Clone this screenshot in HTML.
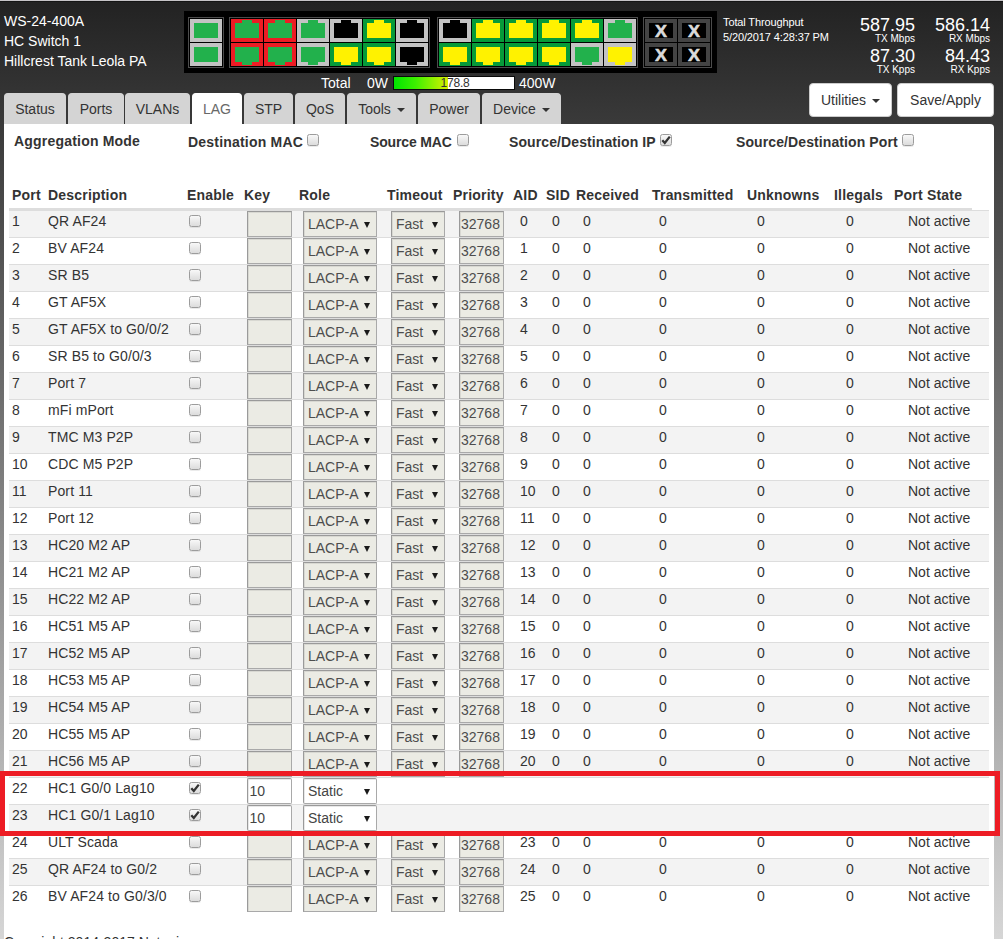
<!DOCTYPE html>
<html lang="en"><head><meta charset="utf-8"><title>WS-24-400A - HC Switch 1</title>
<style>
html,body{margin:0;padding:0}
html{background:#dadada;width:1003px;height:939px;overflow:hidden}
body{width:1003px;height:939px;position:relative;overflow:hidden;font-family:"Liberation Sans",Arial,sans-serif;font-size:14px;color:#333;
 background:linear-gradient(to bottom,#222 0,#dadada 960px)}
#topline{position:absolute;left:0;top:0;width:1003px;height:2px;background:linear-gradient(#c6c4c7 0,#c6c4c7 50%,#151515 50%,#151515 100%)}
.abs{position:absolute}
#hdr{position:absolute;left:0;top:0;width:1003px;height:128px;color:#fff}
#hdr .nm{position:absolute;left:4px;top:11px;line-height:20px;font-size:14px;white-space:nowrap}
#ports{position:absolute;left:184px;top:11px;width:533px;height:62px;background:#000}
.grp{position:absolute;border:1px solid #4c4c4c;box-sizing:border-box;height:51px;top:6px}
.pt{position:absolute;width:32px;height:23px}
.pt svg{display:block;width:32px;height:23px}
#pw{position:absolute;left:321px;top:75px;height:16px;line-height:16px;font-size:14px;white-space:nowrap}
#pw .bar{position:absolute;left:72px;top:1px;width:122px;height:14px;background:#fff;box-sizing:border-box;border:1px solid #0a0a0a;overflow:hidden}
#pw .bar b{position:absolute;left:0;top:0;height:100%;width:54px;background:linear-gradient(to right,#00e400 0,#3df000 40%,#d8f000 100%)}
#pw .bar span{position:absolute;left:1px;width:100%;letter-spacing:-.2px;text-align:center;top:-1px;font-size:12px;color:#333;line-height:14px}
.tabs{position:absolute;left:4px;top:93px;height:31px}
.tab{position:absolute;top:0;height:31px;box-sizing:border-box;background:#d4d4d4;color:#333;border-radius:4px 4px 0 0;line-height:30px;text-align:center;font-size:14px;border:1px solid #d4d4d4;border-bottom:none}
.tab.act{background:#fff;color:#686868;border-color:#fff}
.caret{display:inline-block;width:0;height:0;margin-left:6px;vertical-align:middle;border-top:4px solid #333;border-right:4px solid transparent;border-left:4px solid transparent}
.btn{position:absolute;top:83px;height:34px;box-sizing:border-box;background:#fff;color:#333;border:1px solid #ccc;border-radius:4px;line-height:32px;text-align:center;font-size:14px}
.tp{position:absolute;font-size:11px;white-space:nowrap;line-height:13px;letter-spacing:-.12px}
.big{position:absolute;font-size:18px;line-height:20px;text-align:right;white-space:nowrap}
.sm{position:absolute;font-size:10px;line-height:12px;text-align:right;white-space:nowrap}
#panel{position:absolute;left:4px;top:124px;width:990px;height:815px;overflow:hidden;background:#fff;border-radius:0 4px 0 0}
.agg{position:absolute;left:0;top:0;width:100%;height:30px}
.al{position:absolute;top:9px;font-weight:bold;font-size:14px;line-height:16px;white-space:nowrap;letter-spacing:.2px}
.cb{display:inline-block;width:12px;height:12px;box-sizing:border-box;border:1px solid #9c9c9c;border-radius:2.5px;background:linear-gradient(#f8f8f8,#dcdcdc);box-shadow:0 1px 0 rgba(0,0,0,.08);vertical-align:top;position:relative}
.cb.abs{position:absolute}
.cb svg{position:absolute;left:-1px;top:-1px;width:12px;height:12px}
.cb svg path{fill:none;stroke:#333;stroke-width:2.3;stroke-linecap:butt;stroke-linejoin:miter}
table.lag{position:absolute;left:5px;top:58px;border-collapse:separate;border-spacing:0;table-layout:fixed;width:980px}
#hline{position:absolute;left:5px;top:84px;width:963px;height:2px;background:#ddd}
table.lag th{box-sizing:border-box;font-weight:bold;text-align:left;padding:0 0 0 5px;height:28px;line-height:26px;border-bottom:2px solid transparent;white-space:nowrap;letter-spacing:.2px;vertical-align:bottom}
table.lag td{box-sizing:border-box;height:27px;padding:0 0 0 5px;border-top:1px solid #ddd;line-height:18px;vertical-align:top;white-space:nowrap;padding-top:1px}
table.lag tr.o td{background:#f3f3f3}
table.lag td.ci{padding:0 0 0 0;line-height:0}
.inp,.sel{display:inline-block;box-sizing:border-box;height:26px;border:1px solid #a9a9a9;border-top-color:#9a9a9a;border-left-color:#9a9a9a;box-shadow:inset 1px 1px 0 #d8d8d2;background:#ebebe4;font-size:14px;line-height:24px;color:#4d4d4d;vertical-align:top;position:relative;white-space:nowrap;text-align:left}
.inp.en,.sel.en{border-radius:2px;background:#fff;color:#444;box-shadow:inset 1px 1px 0 #e8e8e8}
.inp.k{width:45px;margin-left:8px;padding-left:3px}
.inp.p{width:45px;margin-left:11px;padding-left:1px;line-height:25px}
.sel.r{width:74px;margin-left:9px;padding-left:4px;line-height:25px}
.sel.t{width:54px;margin-left:9px;padding-left:4px;line-height:25px}
.sel i{position:absolute;right:6px;top:10px;width:0;height:0;font-size:0;line-height:0;overflow:hidden;border-left:3px solid transparent;border-right:3px solid transparent;border-top:6px solid #1a1a1a}
.inp.k.en{line-height:25px;padding-left:1.5px}
td.c3{padding-left:7px !important;padding-top:4px !important}
td.c1,table.lag th:first-child{padding-left:3px !important}
td.c2{letter-spacing:.12px}
td.c8{padding-left:12px !important}
td.c9{padding-left:11px !important}
td.c10{padding-left:12px !important}
td.c11{padding-left:12px !important}
td.c12{padding-left:15px !important}
td.c13{padding-left:17px !important}
td.c14{padding-left:19px !important}
.copy{position:absolute;left:0;top:810px;font-size:14px;line-height:16px;white-space:nowrap}
#redbox{position:absolute;left:0;top:771px;width:1000px;height:65px;box-sizing:border-box;border:5px solid #ed1c24}

</style></head>
<body>
<div id="topline"></div><div id="hdr">
<div class="nm">WS-24-400A<br>HC Switch 1<br>Hillcrest Tank Leola PA</div>
<div id="ports">
<div class="grp" style="left:4px;width:36px"></div>
<div class="grp" style="left:45px;width:201px"></div>
<div class="grp" style="left:253px;width:201px"></div>
<div class="grp" style="left:459px;width:69px"></div>
<div class="pt" style="left:6px;top:8px"><svg viewBox="0 0 32 23"><rect width="32" height="23" fill="#c3c3c3"/><rect x="4" y="4" width="24" height="15" fill="#22b14c"/></svg></div>
<div class="pt" style="left:6px;top:32px"><svg viewBox="0 0 32 23"><rect width="32" height="23" fill="#c3c3c3"/><rect x="4" y="4" width="24" height="15" fill="#22b14c"/></svg></div>
<div class="pt" style="left:47px;top:8px"><svg viewBox="0 0 32 23"><rect width="32" height="23" fill="#ed1c24"/><rect x="4" y="4" width="24" height="15" fill="#22b14c"/><rect x="11" y="1" width="10" height="4" fill="#22b14c"/></svg></div>
<div class="pt" style="left:47px;top:32px"><svg viewBox="0 0 32 23"><rect width="32" height="23" fill="#ed1c24"/><rect x="4" y="4" width="24" height="15" fill="#22b14c"/><rect x="11" y="18" width="10" height="4" fill="#22b14c"/></svg></div>
<div class="pt" style="left:80px;top:8px"><svg viewBox="0 0 32 23"><rect width="32" height="23" fill="#ed1c24"/><rect x="4" y="4" width="24" height="15" fill="#22b14c"/><rect x="11" y="1" width="10" height="4" fill="#22b14c"/></svg></div>
<div class="pt" style="left:80px;top:32px"><svg viewBox="0 0 32 23"><rect width="32" height="23" fill="#ed1c24"/><rect x="4" y="4" width="24" height="15" fill="#22b14c"/><rect x="11" y="18" width="10" height="4" fill="#22b14c"/></svg></div>
<div class="pt" style="left:113px;top:8px"><svg viewBox="0 0 32 23"><rect width="32" height="23" fill="#c3c3c3"/><rect x="4" y="4" width="24" height="15" fill="#22b14c"/><rect x="11" y="1" width="10" height="4" fill="#22b14c"/></svg></div>
<div class="pt" style="left:113px;top:32px"><svg viewBox="0 0 32 23"><rect width="32" height="23" fill="#c3c3c3"/><rect x="4" y="4" width="24" height="15" fill="#22b14c"/><rect x="11" y="18" width="10" height="4" fill="#22b14c"/></svg></div>
<div class="pt" style="left:146px;top:8px"><svg viewBox="0 0 32 23"><rect width="32" height="23" fill="#c3c3c3"/><rect x="4" y="4" width="24" height="15" fill="#000"/><rect x="11" y="1" width="10" height="4" fill="#000"/></svg></div>
<div class="pt" style="left:146px;top:32px"><svg viewBox="0 0 32 23"><rect width="32" height="23" fill="#069a39"/><rect x="4" y="4" width="24" height="15" fill="#fff200"/><rect x="11" y="18" width="10" height="4" fill="#fff200"/></svg></div>
<div class="pt" style="left:179px;top:8px"><svg viewBox="0 0 32 23"><rect width="32" height="23" fill="#069a39"/><rect x="4" y="4" width="24" height="15" fill="#fff200"/><rect x="11" y="1" width="10" height="4" fill="#fff200"/></svg></div>
<div class="pt" style="left:179px;top:32px"><svg viewBox="0 0 32 23"><rect width="32" height="23" fill="#069a39"/><rect x="4" y="4" width="24" height="15" fill="#fff200"/><rect x="11" y="18" width="10" height="4" fill="#fff200"/></svg></div>
<div class="pt" style="left:212px;top:8px"><svg viewBox="0 0 32 23"><rect width="32" height="23" fill="#c3c3c3"/><rect x="4" y="4" width="24" height="15" fill="#000"/><rect x="11" y="1" width="10" height="4" fill="#000"/></svg></div>
<div class="pt" style="left:212px;top:32px"><svg viewBox="0 0 32 23"><rect width="32" height="23" fill="#c3c3c3"/><rect x="4" y="4" width="24" height="15" fill="#000"/><rect x="11" y="18" width="10" height="4" fill="#000"/></svg></div>
<div class="pt" style="left:255px;top:8px"><svg viewBox="0 0 32 23"><rect width="32" height="23" fill="#c3c3c3"/><rect x="4" y="4" width="24" height="15" fill="#000"/><rect x="11" y="1" width="10" height="4" fill="#000"/></svg></div>
<div class="pt" style="left:255px;top:32px"><svg viewBox="0 0 32 23"><rect width="32" height="23" fill="#069a39"/><rect x="4" y="4" width="24" height="15" fill="#fff200"/><rect x="11" y="18" width="10" height="4" fill="#fff200"/></svg></div>
<div class="pt" style="left:288px;top:8px"><svg viewBox="0 0 32 23"><rect width="32" height="23" fill="#069a39"/><rect x="4" y="4" width="24" height="15" fill="#fff200"/><rect x="11" y="1" width="10" height="4" fill="#fff200"/></svg></div>
<div class="pt" style="left:288px;top:32px"><svg viewBox="0 0 32 23"><rect width="32" height="23" fill="#069a39"/><rect x="4" y="4" width="24" height="15" fill="#fff200"/><rect x="11" y="18" width="10" height="4" fill="#fff200"/></svg></div>
<div class="pt" style="left:321px;top:8px"><svg viewBox="0 0 32 23"><rect width="32" height="23" fill="#069a39"/><rect x="4" y="4" width="24" height="15" fill="#fff200"/><rect x="11" y="1" width="10" height="4" fill="#fff200"/></svg></div>
<div class="pt" style="left:321px;top:32px"><svg viewBox="0 0 32 23"><rect width="32" height="23" fill="#069a39"/><rect x="4" y="4" width="24" height="15" fill="#fff200"/><rect x="11" y="18" width="10" height="4" fill="#fff200"/></svg></div>
<div class="pt" style="left:354px;top:8px"><svg viewBox="0 0 32 23"><rect width="32" height="23" fill="#069a39"/><rect x="4" y="4" width="24" height="15" fill="#fff200"/><rect x="11" y="1" width="10" height="4" fill="#fff200"/></svg></div>
<div class="pt" style="left:354px;top:32px"><svg viewBox="0 0 32 23"><rect width="32" height="23" fill="#069a39"/><rect x="4" y="4" width="24" height="15" fill="#fff200"/><rect x="11" y="18" width="10" height="4" fill="#fff200"/></svg></div>
<div class="pt" style="left:387px;top:8px"><svg viewBox="0 0 32 23"><rect width="32" height="23" fill="#069a39"/><rect x="4" y="4" width="24" height="15" fill="#fff200"/><rect x="11" y="1" width="10" height="4" fill="#fff200"/></svg></div>
<div class="pt" style="left:387px;top:32px"><svg viewBox="0 0 32 23"><rect width="32" height="23" fill="#c3c3c3"/><rect x="4" y="4" width="24" height="15" fill="#22b14c"/><rect x="11" y="18" width="10" height="4" fill="#22b14c"/></svg></div>
<div class="pt" style="left:420px;top:8px"><svg viewBox="0 0 32 23"><rect width="32" height="23" fill="#c3c3c3"/><rect x="4" y="4" width="24" height="15" fill="#22b14c"/><rect x="11" y="1" width="10" height="4" fill="#22b14c"/></svg></div>
<div class="pt" style="left:420px;top:32px"><svg viewBox="0 0 32 23"><rect width="32" height="23" fill="#c3c3c3"/><rect x="4" y="4" width="24" height="15" fill="#fff200"/><rect x="11" y="18" width="10" height="4" fill="#fff200"/></svg></div>
<div class="pt xp" style="left:461px;top:8px"><svg viewBox="0 0 32 23"><rect width="32" height="23" fill="#444"/><rect x="4" y="4" width="24" height="15" fill="#000"/><text x="16" y="18.3" stroke="#dadada" stroke-width="0.5" text-anchor="middle" textLength="12" lengthAdjust="spacingAndGlyphs" font-family="Liberation Sans,Arial,sans-serif" font-weight="bold" font-size="16" fill="#dadada">X</text></svg></div>
<div class="pt xp" style="left:461px;top:32px"><svg viewBox="0 0 32 23"><rect width="32" height="23" fill="#444"/><rect x="4" y="4" width="24" height="15" fill="#000"/><text x="16" y="18.3" stroke="#dadada" stroke-width="0.5" text-anchor="middle" textLength="12" lengthAdjust="spacingAndGlyphs" font-family="Liberation Sans,Arial,sans-serif" font-weight="bold" font-size="16" fill="#dadada">X</text></svg></div>
<div class="pt xp" style="left:494px;top:8px"><svg viewBox="0 0 32 23"><rect width="32" height="23" fill="#444"/><rect x="4" y="4" width="24" height="15" fill="#000"/><text x="16" y="18.3" stroke="#dadada" stroke-width="0.5" text-anchor="middle" textLength="12" lengthAdjust="spacingAndGlyphs" font-family="Liberation Sans,Arial,sans-serif" font-weight="bold" font-size="16" fill="#dadada">X</text></svg></div>
<div class="pt xp" style="left:494px;top:32px"><svg viewBox="0 0 32 23"><rect width="32" height="23" fill="#444"/><rect x="4" y="4" width="24" height="15" fill="#000"/><text x="16" y="18.3" stroke="#dadada" stroke-width="0.5" text-anchor="middle" textLength="12" lengthAdjust="spacingAndGlyphs" font-family="Liberation Sans,Arial,sans-serif" font-weight="bold" font-size="16" fill="#dadada">X</text></svg></div>
</div>
<div id="pw"><span style="position:absolute;left:0">Total</span><span style="position:absolute;left:46px">0W</span><div class="bar"><b></b><span>178.8</span></div><span style="position:absolute;left:198px">400W</span></div>
<div class="tp" style="left:723px;top:16px">Total Throughput</div>
<div class="tp" style="left:723px;top:31px">5/20/2017 4:28:37 PM</div>
<div class="big" style="right:88px;top:15px">587.95</div>
<div class="sm" style="right:88px;top:33px">TX Mbps</div>
<div class="big" style="right:13px;top:15px">586.14</div>
<div class="sm" style="right:13px;top:33px">RX Mbps</div>
<div class="big" style="right:88px;top:46px">87.30</div>
<div class="sm" style="right:88px;top:64px">TX Kpps</div>
<div class="big" style="right:13px;top:46px">84.43</div>
<div class="sm" style="right:13px;top:64px">RX Kpps</div>
<div class="btn" style="left:809px;width:83px">Utilities<span class="caret"></span></div>
<div class="btn" style="left:897px;width:97px">Save/Apply</div>
<div class="tabs">
<div class="tab" style="left:0px;width:62px">Status</div>
<div class="tab" style="left:64px;width:56px">Ports</div>
<div class="tab" style="left:121px;width:65px">VLANs</div>
<div class="tab act" style="left:188px;width:50px">LAG</div>
<div class="tab" style="left:240px;width:49px">STP</div>
<div class="tab" style="left:291px;width:50px">QoS</div>
<div class="tab" style="left:343px;width:69px">Tools<span class=caret></span></div>
<div class="tab" style="left:414px;width:62px">Power</div>
<div class="tab" style="left:478px;width:79px">Device<span class=caret></span></div>
</div>
</div>
<div id="panel">
<div class="agg">
<span class="al" style="left:10px">Aggregation Mode</span>
<span class="al" style="left:184px;top:10px">Destination MAC</span><span class="cb abs" style="left:303px;top:10px"></span>
<span class="al" style="left:366px;top:10px;letter-spacing:-.15px">Source MAC</span><span class="cb abs" style="left:453px;top:10px"></span>
<span class="al" style="left:505px;top:10px;letter-spacing:.1px">Source/Destination IP</span><span class="cb abs on" style="left:656px;top:10px"><svg viewBox="0 0 12 12"><path d="M2.3 6.2 L4.8 9 L9.8 2.6" /></svg></span>
<span class="al" style="left:732px;top:10px;letter-spacing:.1px">Source/Destination Port</span><span class="cb abs" style="left:898px;top:10px"></span>
</div>
<table class="lag"><colgroup>
<col style="width:34px"><col style="width:139px"><col style="width:57px"><col style="width:55px"><col style="width:88px"><col style="width:66px"><col style="width:60px"><col style="width:33px"><col style="width:30px"><col style="width:76px"><col style="width:95px"><col style="width:87px"><col style="width:60px"><col style="width:100px">
</colgroup>
<thead><tr><th>Port</th><th>Description</th><th>Enable</th><th>Key</th><th>Role</th><th>Timeout</th><th>Priority</th><th>AID</th><th>SID</th><th>Received</th><th>Transmitted</th><th>Unknowns</th><th>Illegals</th><th>Port State</th></tr></thead>
<tbody>
<tr class="o"><td class="c1">1</td><td class="c2">QR AF24</td><td class="c3"><span class="cb"></span></td><td class="ci"><span class="inp k"></span></td><td class="ci"><span class="sel r">LACP-A<i>&#9660;</i></span></td><td class="ci"><span class="sel t">Fast<i>&#9660;</i></span></td><td class="ci"><span class="inp p">32768</span></td><td class="c8">0</td><td class="c9">0</td><td class="c10">0</td><td class="c11">0</td><td class="c12">0</td><td class="c13">0</td><td class="c14">Not active</td></tr>
<tr class="e"><td class="c1">2</td><td class="c2">BV AF24</td><td class="c3"><span class="cb"></span></td><td class="ci"><span class="inp k"></span></td><td class="ci"><span class="sel r">LACP-A<i>&#9660;</i></span></td><td class="ci"><span class="sel t">Fast<i>&#9660;</i></span></td><td class="ci"><span class="inp p">32768</span></td><td class="c8">1</td><td class="c9">0</td><td class="c10">0</td><td class="c11">0</td><td class="c12">0</td><td class="c13">0</td><td class="c14">Not active</td></tr>
<tr class="o"><td class="c1">3</td><td class="c2">SR B5</td><td class="c3"><span class="cb"></span></td><td class="ci"><span class="inp k"></span></td><td class="ci"><span class="sel r">LACP-A<i>&#9660;</i></span></td><td class="ci"><span class="sel t">Fast<i>&#9660;</i></span></td><td class="ci"><span class="inp p">32768</span></td><td class="c8">2</td><td class="c9">0</td><td class="c10">0</td><td class="c11">0</td><td class="c12">0</td><td class="c13">0</td><td class="c14">Not active</td></tr>
<tr class="e"><td class="c1">4</td><td class="c2">GT AF5X</td><td class="c3"><span class="cb"></span></td><td class="ci"><span class="inp k"></span></td><td class="ci"><span class="sel r">LACP-A<i>&#9660;</i></span></td><td class="ci"><span class="sel t">Fast<i>&#9660;</i></span></td><td class="ci"><span class="inp p">32768</span></td><td class="c8">3</td><td class="c9">0</td><td class="c10">0</td><td class="c11">0</td><td class="c12">0</td><td class="c13">0</td><td class="c14">Not active</td></tr>
<tr class="o"><td class="c1">5</td><td class="c2">GT AF5X to G0/0/2</td><td class="c3"><span class="cb"></span></td><td class="ci"><span class="inp k"></span></td><td class="ci"><span class="sel r">LACP-A<i>&#9660;</i></span></td><td class="ci"><span class="sel t">Fast<i>&#9660;</i></span></td><td class="ci"><span class="inp p">32768</span></td><td class="c8">4</td><td class="c9">0</td><td class="c10">0</td><td class="c11">0</td><td class="c12">0</td><td class="c13">0</td><td class="c14">Not active</td></tr>
<tr class="e"><td class="c1">6</td><td class="c2">SR B5 to G0/0/3</td><td class="c3"><span class="cb"></span></td><td class="ci"><span class="inp k"></span></td><td class="ci"><span class="sel r">LACP-A<i>&#9660;</i></span></td><td class="ci"><span class="sel t">Fast<i>&#9660;</i></span></td><td class="ci"><span class="inp p">32768</span></td><td class="c8">5</td><td class="c9">0</td><td class="c10">0</td><td class="c11">0</td><td class="c12">0</td><td class="c13">0</td><td class="c14">Not active</td></tr>
<tr class="o"><td class="c1">7</td><td class="c2">Port 7</td><td class="c3"><span class="cb"></span></td><td class="ci"><span class="inp k"></span></td><td class="ci"><span class="sel r">LACP-A<i>&#9660;</i></span></td><td class="ci"><span class="sel t">Fast<i>&#9660;</i></span></td><td class="ci"><span class="inp p">32768</span></td><td class="c8">6</td><td class="c9">0</td><td class="c10">0</td><td class="c11">0</td><td class="c12">0</td><td class="c13">0</td><td class="c14">Not active</td></tr>
<tr class="e"><td class="c1">8</td><td class="c2">mFi mPort</td><td class="c3"><span class="cb"></span></td><td class="ci"><span class="inp k"></span></td><td class="ci"><span class="sel r">LACP-A<i>&#9660;</i></span></td><td class="ci"><span class="sel t">Fast<i>&#9660;</i></span></td><td class="ci"><span class="inp p">32768</span></td><td class="c8">7</td><td class="c9">0</td><td class="c10">0</td><td class="c11">0</td><td class="c12">0</td><td class="c13">0</td><td class="c14">Not active</td></tr>
<tr class="o"><td class="c1">9</td><td class="c2">TMC M3 P2P</td><td class="c3"><span class="cb"></span></td><td class="ci"><span class="inp k"></span></td><td class="ci"><span class="sel r">LACP-A<i>&#9660;</i></span></td><td class="ci"><span class="sel t">Fast<i>&#9660;</i></span></td><td class="ci"><span class="inp p">32768</span></td><td class="c8">8</td><td class="c9">0</td><td class="c10">0</td><td class="c11">0</td><td class="c12">0</td><td class="c13">0</td><td class="c14">Not active</td></tr>
<tr class="e"><td class="c1">10</td><td class="c2">CDC M5 P2P</td><td class="c3"><span class="cb"></span></td><td class="ci"><span class="inp k"></span></td><td class="ci"><span class="sel r">LACP-A<i>&#9660;</i></span></td><td class="ci"><span class="sel t">Fast<i>&#9660;</i></span></td><td class="ci"><span class="inp p">32768</span></td><td class="c8">9</td><td class="c9">0</td><td class="c10">0</td><td class="c11">0</td><td class="c12">0</td><td class="c13">0</td><td class="c14">Not active</td></tr>
<tr class="o"><td class="c1">11</td><td class="c2">Port 11</td><td class="c3"><span class="cb"></span></td><td class="ci"><span class="inp k"></span></td><td class="ci"><span class="sel r">LACP-A<i>&#9660;</i></span></td><td class="ci"><span class="sel t">Fast<i>&#9660;</i></span></td><td class="ci"><span class="inp p">32768</span></td><td class="c8">10</td><td class="c9">0</td><td class="c10">0</td><td class="c11">0</td><td class="c12">0</td><td class="c13">0</td><td class="c14">Not active</td></tr>
<tr class="e"><td class="c1">12</td><td class="c2">Port 12</td><td class="c3"><span class="cb"></span></td><td class="ci"><span class="inp k"></span></td><td class="ci"><span class="sel r">LACP-A<i>&#9660;</i></span></td><td class="ci"><span class="sel t">Fast<i>&#9660;</i></span></td><td class="ci"><span class="inp p">32768</span></td><td class="c8">11</td><td class="c9">0</td><td class="c10">0</td><td class="c11">0</td><td class="c12">0</td><td class="c13">0</td><td class="c14">Not active</td></tr>
<tr class="o"><td class="c1">13</td><td class="c2">HC20 M2 AP</td><td class="c3"><span class="cb"></span></td><td class="ci"><span class="inp k"></span></td><td class="ci"><span class="sel r">LACP-A<i>&#9660;</i></span></td><td class="ci"><span class="sel t">Fast<i>&#9660;</i></span></td><td class="ci"><span class="inp p">32768</span></td><td class="c8">12</td><td class="c9">0</td><td class="c10">0</td><td class="c11">0</td><td class="c12">0</td><td class="c13">0</td><td class="c14">Not active</td></tr>
<tr class="e"><td class="c1">14</td><td class="c2">HC21 M2 AP</td><td class="c3"><span class="cb"></span></td><td class="ci"><span class="inp k"></span></td><td class="ci"><span class="sel r">LACP-A<i>&#9660;</i></span></td><td class="ci"><span class="sel t">Fast<i>&#9660;</i></span></td><td class="ci"><span class="inp p">32768</span></td><td class="c8">13</td><td class="c9">0</td><td class="c10">0</td><td class="c11">0</td><td class="c12">0</td><td class="c13">0</td><td class="c14">Not active</td></tr>
<tr class="o"><td class="c1">15</td><td class="c2">HC22 M2 AP</td><td class="c3"><span class="cb"></span></td><td class="ci"><span class="inp k"></span></td><td class="ci"><span class="sel r">LACP-A<i>&#9660;</i></span></td><td class="ci"><span class="sel t">Fast<i>&#9660;</i></span></td><td class="ci"><span class="inp p">32768</span></td><td class="c8">14</td><td class="c9">0</td><td class="c10">0</td><td class="c11">0</td><td class="c12">0</td><td class="c13">0</td><td class="c14">Not active</td></tr>
<tr class="e"><td class="c1">16</td><td class="c2">HC51 M5 AP</td><td class="c3"><span class="cb"></span></td><td class="ci"><span class="inp k"></span></td><td class="ci"><span class="sel r">LACP-A<i>&#9660;</i></span></td><td class="ci"><span class="sel t">Fast<i>&#9660;</i></span></td><td class="ci"><span class="inp p">32768</span></td><td class="c8">15</td><td class="c9">0</td><td class="c10">0</td><td class="c11">0</td><td class="c12">0</td><td class="c13">0</td><td class="c14">Not active</td></tr>
<tr class="o"><td class="c1">17</td><td class="c2">HC52 M5 AP</td><td class="c3"><span class="cb"></span></td><td class="ci"><span class="inp k"></span></td><td class="ci"><span class="sel r">LACP-A<i>&#9660;</i></span></td><td class="ci"><span class="sel t">Fast<i>&#9660;</i></span></td><td class="ci"><span class="inp p">32768</span></td><td class="c8">16</td><td class="c9">0</td><td class="c10">0</td><td class="c11">0</td><td class="c12">0</td><td class="c13">0</td><td class="c14">Not active</td></tr>
<tr class="e"><td class="c1">18</td><td class="c2">HC53 M5 AP</td><td class="c3"><span class="cb"></span></td><td class="ci"><span class="inp k"></span></td><td class="ci"><span class="sel r">LACP-A<i>&#9660;</i></span></td><td class="ci"><span class="sel t">Fast<i>&#9660;</i></span></td><td class="ci"><span class="inp p">32768</span></td><td class="c8">17</td><td class="c9">0</td><td class="c10">0</td><td class="c11">0</td><td class="c12">0</td><td class="c13">0</td><td class="c14">Not active</td></tr>
<tr class="o"><td class="c1">19</td><td class="c2">HC54 M5 AP</td><td class="c3"><span class="cb"></span></td><td class="ci"><span class="inp k"></span></td><td class="ci"><span class="sel r">LACP-A<i>&#9660;</i></span></td><td class="ci"><span class="sel t">Fast<i>&#9660;</i></span></td><td class="ci"><span class="inp p">32768</span></td><td class="c8">18</td><td class="c9">0</td><td class="c10">0</td><td class="c11">0</td><td class="c12">0</td><td class="c13">0</td><td class="c14">Not active</td></tr>
<tr class="e"><td class="c1">20</td><td class="c2">HC55 M5 AP</td><td class="c3"><span class="cb"></span></td><td class="ci"><span class="inp k"></span></td><td class="ci"><span class="sel r">LACP-A<i>&#9660;</i></span></td><td class="ci"><span class="sel t">Fast<i>&#9660;</i></span></td><td class="ci"><span class="inp p">32768</span></td><td class="c8">19</td><td class="c9">0</td><td class="c10">0</td><td class="c11">0</td><td class="c12">0</td><td class="c13">0</td><td class="c14">Not active</td></tr>
<tr class="o"><td class="c1">21</td><td class="c2">HC56 M5 AP</td><td class="c3"><span class="cb"></span></td><td class="ci"><span class="inp k"></span></td><td class="ci"><span class="sel r">LACP-A<i>&#9660;</i></span></td><td class="ci"><span class="sel t">Fast<i>&#9660;</i></span></td><td class="ci"><span class="inp p">32768</span></td><td class="c8">20</td><td class="c9">0</td><td class="c10">0</td><td class="c11">0</td><td class="c12">0</td><td class="c13">0</td><td class="c14">Not active</td></tr>
<tr class="e"><td class="c1">22</td><td class="c2">HC1 G0/0 Lag10</td><td class="c3"><span class="cb on"><svg viewBox="0 0 12 12"><path d="M2.3 6.2 L4.8 9 L9.8 2.6" /></svg></span></td><td class="ci"><span class="inp k en">10</span></td><td class="ci"><span class="sel r en">Static<i>&#9660;</i></span></td><td colspan="9"></td></tr>
<tr class="o"><td class="c1">23</td><td class="c2">HC1 G0/1 Lag10</td><td class="c3"><span class="cb on"><svg viewBox="0 0 12 12"><path d="M2.3 6.2 L4.8 9 L9.8 2.6" /></svg></span></td><td class="ci"><span class="inp k en">10</span></td><td class="ci"><span class="sel r en">Static<i>&#9660;</i></span></td><td colspan="9"></td></tr>
<tr class="e"><td class="c1">24</td><td class="c2">ULT Scada</td><td class="c3"><span class="cb"></span></td><td class="ci"><span class="inp k"></span></td><td class="ci"><span class="sel r">LACP-A<i>&#9660;</i></span></td><td class="ci"><span class="sel t">Fast<i>&#9660;</i></span></td><td class="ci"><span class="inp p">32768</span></td><td class="c8">23</td><td class="c9">0</td><td class="c10">0</td><td class="c11">0</td><td class="c12">0</td><td class="c13">0</td><td class="c14">Not active</td></tr>
<tr class="o"><td class="c1">25</td><td class="c2">QR AF24 to G0/2</td><td class="c3"><span class="cb"></span></td><td class="ci"><span class="inp k"></span></td><td class="ci"><span class="sel r">LACP-A<i>&#9660;</i></span></td><td class="ci"><span class="sel t">Fast<i>&#9660;</i></span></td><td class="ci"><span class="inp p">32768</span></td><td class="c8">24</td><td class="c9">0</td><td class="c10">0</td><td class="c11">0</td><td class="c12">0</td><td class="c13">0</td><td class="c14">Not active</td></tr>
<tr class="e"><td class="c1">26</td><td class="c2">BV AF24 to G0/3/0</td><td class="c3"><span class="cb"></span></td><td class="ci"><span class="inp k"></span></td><td class="ci"><span class="sel r">LACP-A<i>&#9660;</i></span></td><td class="ci"><span class="sel t">Fast<i>&#9660;</i></span></td><td class="ci"><span class="inp p">32768</span></td><td class="c8">25</td><td class="c9">0</td><td class="c10">0</td><td class="c11">0</td><td class="c12">0</td><td class="c13">0</td><td class="c14">Not active</td></tr>
</tbody></table>
<div id="hline"></div>
<div class="copy">Copyright 2014-2017 Netonix</div>
</div>
<div id="redbox"></div>
</body></html>
